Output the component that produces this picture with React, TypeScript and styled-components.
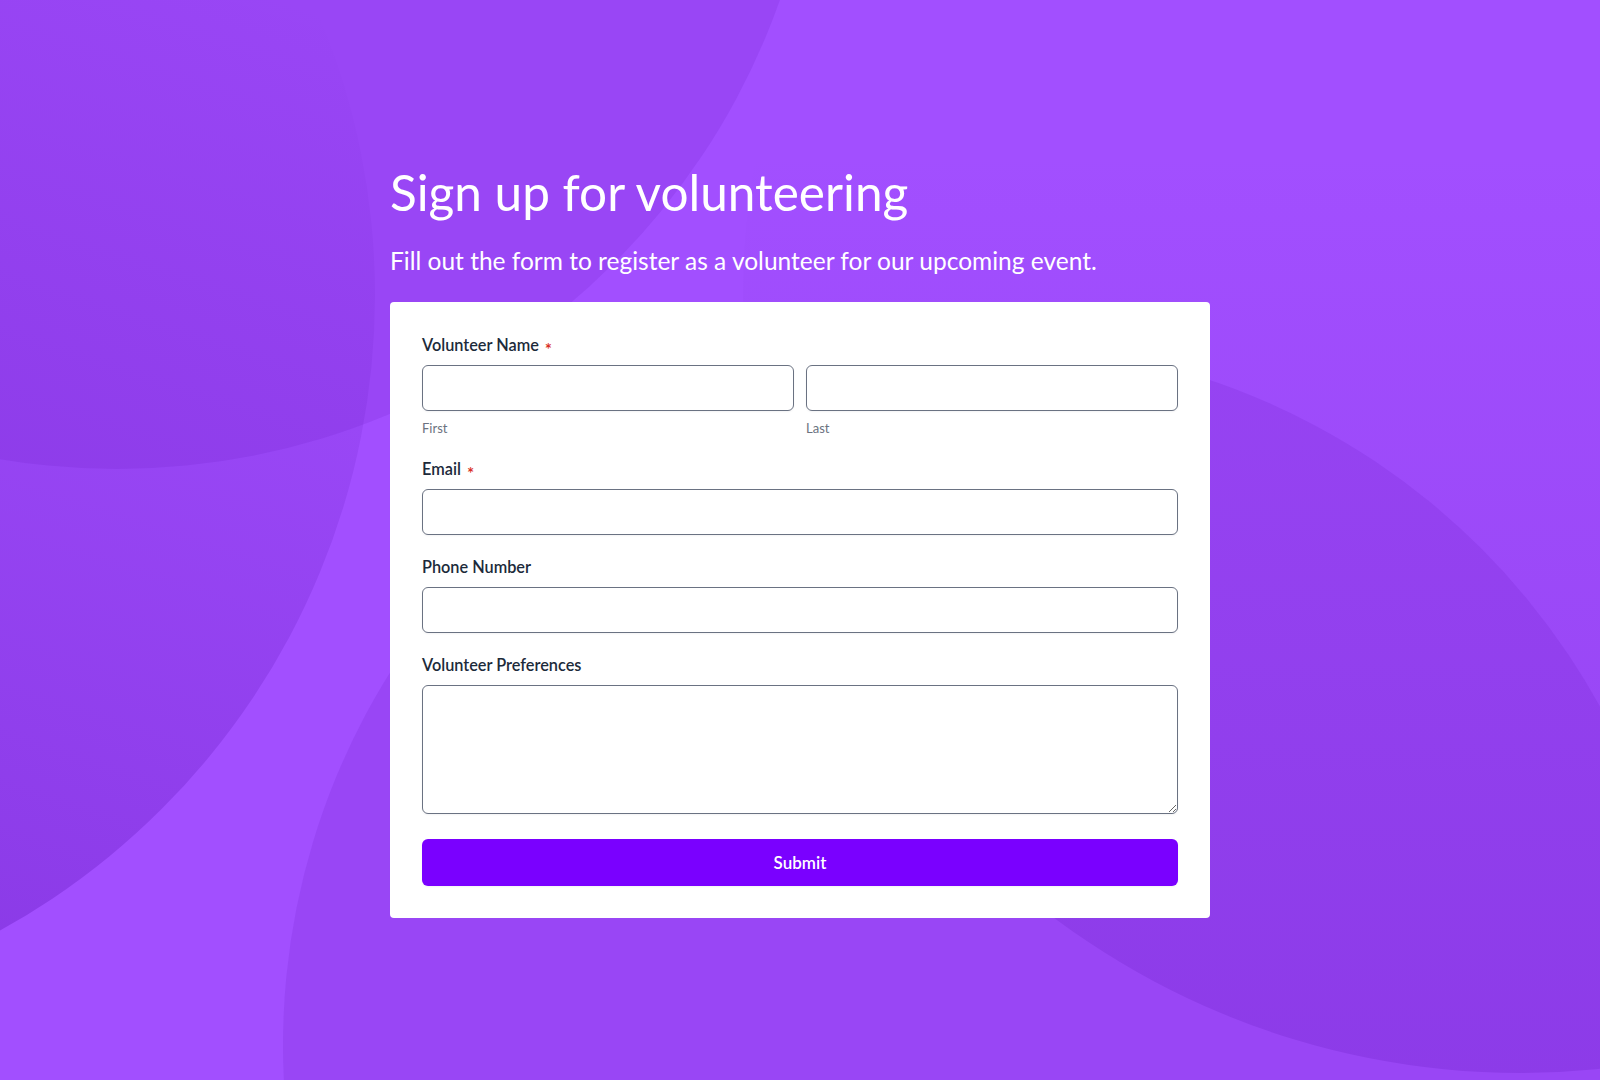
import React, { FC } from 'react';
import styled, { createGlobalStyle } from 'styled-components';

const GlobalStyle = createGlobalStyle`
  html, body {
    margin: 0;
    padding: 0;
  }
  body {
    font-family: Lato, 'Open Sans', 'Liberation Sans', sans-serif;
    -webkit-font-smoothing: antialiased;
  }
  * {
    box-sizing: border-box;
  }
`;

const Page = styled.main`
  position: relative;
  min-height: 100vh;
  background: #a24fff;
  overflow: hidden;
`;

const Backdrop = styled.svg`
  position: absolute;
  inset: 0;
  width: 100%;
  height: 100%;
  display: block;
`;

const Shell = styled.div`
  position: relative;
  width: 820px;
  margin: 0 auto;
  padding: 162px 0 80px;
`;

const Title = styled.h1`
  margin: 0;
  font-size: 49.5px;
  line-height: 61px;
  font-weight: 400;
  color: #ffffff;
`;

const Lead = styled.p`
  margin: 23px 0 27px;
  font-size: 24.5px;
  line-height: 29px;
  font-weight: 400;
  color: #ffffff;
`;

const Card = styled.form`
  display: flex;
  flex-direction: column;
  gap: 22px;
  padding: 33px 32px 32px;
  background: #ffffff;
  border-radius: 4px;
`;

const Field = styled.div`
  display: flex;
  flex-direction: column;
`;

const Label = styled.label`
  display: flex;
  align-items: center;
  gap: 6px;
  margin-bottom: 10px;
  font-size: 16.3px;
  line-height: 20px;
  font-weight: 600;
  color: #1c2a3a;
`;

const Required = styled.span`
  display: inline-block;
  font-size: 17px;
  line-height: 1;
  color: #d93025;
  transform: translateY(4px);
`;

const NameRow = styled.div`
  display: grid;
  grid-template-columns: 1fr 1fr;
  gap: 12px;
`;

const Column = styled.div`
  display: flex;
  flex-direction: column;
`;

const Input = styled.input`
  width: 100%;
  height: 46px;
  padding: 0 12px;
  border: 1px solid #6a7282;
  border-radius: 6px;
  background: #ffffff;
  font: inherit;
  font-size: 16px;
  color: #1c2a3a;
  box-shadow: 0 1px 2px rgba(16, 24, 40, 0.05);
  outline: none;
`;

const TextArea = styled.textarea`
  width: 100%;
  height: 129px;
  padding: 10px 12px;
  border: 1px solid #6a7282;
  border-radius: 6px;
  background: #ffffff;
  font: inherit;
  font-size: 16px;
  color: #1c2a3a;
  box-shadow: 0 1px 2px rgba(16, 24, 40, 0.05);
  resize: vertical;
  outline: none;
`;

const Hint = styled.span`
  margin-top: 8px;
  font-size: 13px;
  line-height: 18px;
  color: #6b7280;
`;

const SubmitBtn = styled.button`
  margin-top: 3px;
  height: 47px;
  border: none;
  border-radius: 6px;
  background: #7a00ff;
  color: #ffffff;
  font: inherit;
  font-size: 17px;
  font-weight: 600;
  cursor: pointer;
  box-shadow: 0 1px 2px rgba(16, 24, 40, 0.05);

  &:hover {
    background: #6c00e6;
  }
`;

const Circles: FC = () => (
  <Backdrop viewBox="0 0 1600 1080" preserveAspectRatio="none" aria-hidden="true">
    <defs>
      <linearGradient id="fadeLeft" gradientUnits="userSpaceOnUse" x1="300" y1="0" x2="0" y2="950">
        <stop offset="0" stopColor="#5a0fb4" stopOpacity="0" />
        <stop offset="1" stopColor="#5a0fb4" stopOpacity="0.32" />
      </linearGradient>
      <linearGradient id="fadeRight" gradientUnits="userSpaceOnUse" x1="0" y1="150" x2="0" y2="1080">
        <stop offset="0" stopColor="#5a0fb4" stopOpacity="0" />
        <stop offset="1" stopColor="#5a0fb4" stopOpacity="0.2" />
      </linearGradient>
    </defs>
    <circle cx="117" cy="-234" r="703" fill="#5a0fb4" fillOpacity="0.13" />
    <circle cx="-351" cy="295" r="726" fill="url(#fadeLeft)" />
    <circle cx="985" cy="1045" r="702" fill="#5a0fb4" fillOpacity="0.13" />
    <circle cx="1520" cy="296" r="777" fill="url(#fadeRight)" />
  </Backdrop>
);

const App: FC = () => {
  const handleSubmit = (event: React.FormEvent<HTMLFormElement>) => {
    event.preventDefault();
  };

  return (
    <>
      <GlobalStyle />
      <Page>
        <Circles />
        <Shell>
          <Title>Sign up for volunteering</Title>
          <Lead>Fill out the form to register as a volunteer for our upcoming event.</Lead>
          <Card onSubmit={handleSubmit}>
            <Field>
              <Label htmlFor="first">
                Volunteer Name <Required>*</Required>
              </Label>
              <NameRow>
                <Column>
                  <Input id="first" name="first" type="text" />
                  <Hint>First</Hint>
                </Column>
                <Column>
                  <Input id="last" name="last" type="text" />
                  <Hint>Last</Hint>
                </Column>
              </NameRow>
            </Field>
            <Field>
              <Label htmlFor="email">
                Email <Required>*</Required>
              </Label>
              <Input id="email" name="email" type="email" />
            </Field>
            <Field>
              <Label htmlFor="phone">Phone Number</Label>
              <Input id="phone" name="phone" type="tel" />
            </Field>
            <Field>
              <Label htmlFor="prefs">Volunteer Preferences</Label>
              <TextArea id="prefs" name="prefs" />
            </Field>
            <SubmitBtn type="submit">Submit</SubmitBtn>
          </Card>
        </Shell>
      </Page>
    </>
  );
};

export default App;
